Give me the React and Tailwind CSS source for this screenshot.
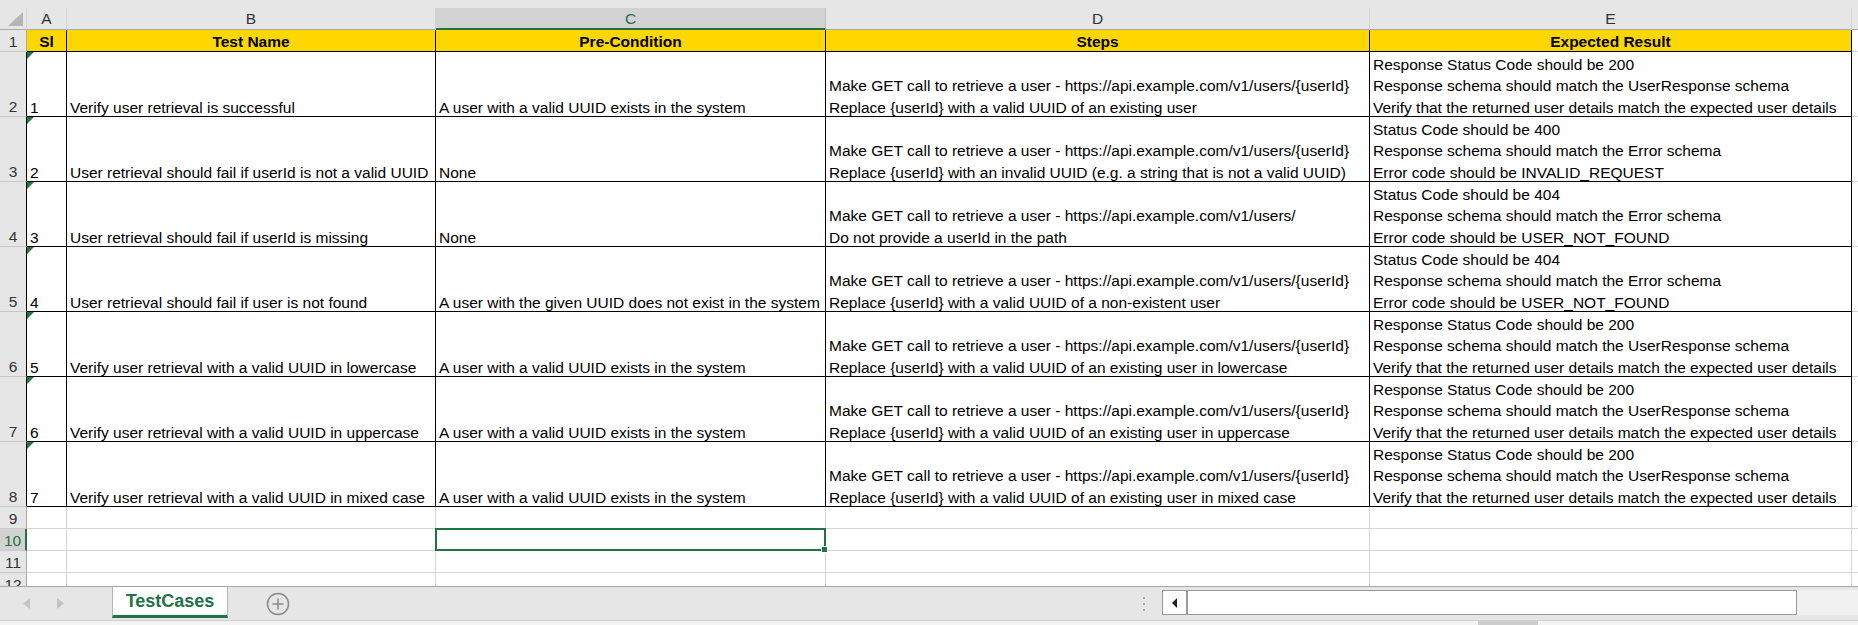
import { Fragment } from "react"

const GRID = "grid grid-cols-[27px_40px_369px_390px_544px_482px_1fr] grid-rows-[100%]"
const LETTERS = ["A", "B", "C", "D", "E"]
const HEADINGS = ["Sl", "Test Name", "Pre-Condition", "Steps", "Expected Result"]

const GET_CALL = "Make GET call to retrieve a user - https://api.example.com/v1/users/{userId}"
const EXISTS = "A user with a valid UUID exists in the system"
const OK_RESULT = [
  "Response Status Code should be 200",
  "Response schema should match the UserResponse schema",
  "Verify that the returned user details match the expected user details",
]
const NOT_FOUND = [
  "Status Code should be 404",
  "Response schema should match the Error schema",
  "Error code should be USER_NOT_FOUND",
]

const CASES = [
  {
    sl: "1",
    name: "Verify user retrieval is successful",
    pre: EXISTS,
    steps: [GET_CALL, "Replace {userId} with a valid UUID of an existing user"],
    expected: OK_RESULT,
  },
  {
    sl: "2",
    name: "User retrieval should fail if userId is not a valid UUID",
    pre: "None",
    steps: [GET_CALL, "Replace {userId} with an invalid UUID (e.g. a string that is not a valid UUID)"],
    expected: [
      "Status Code should be 400",
      "Response schema should match the Error schema",
      "Error code should be INVALID_REQUEST",
    ],
  },
  {
    sl: "3",
    name: "User retrieval should fail if userId is missing",
    pre: "None",
    steps: ["Make GET call to retrieve a user - https://api.example.com/v1/users/", "Do not provide a userId in the path"],
    expected: NOT_FOUND,
  },
  {
    sl: "4",
    name: "User retrieval should fail if user is not found",
    pre: "A user with the given UUID does not exist in the system",
    steps: [GET_CALL, "Replace {userId} with a valid UUID of a non-existent user"],
    expected: NOT_FOUND,
  },
  {
    sl: "5",
    name: "Verify user retrieval with a valid UUID in lowercase",
    pre: EXISTS,
    steps: [GET_CALL, "Replace {userId} with a valid UUID of an existing user in lowercase"],
    expected: OK_RESULT,
  },
  {
    sl: "6",
    name: "Verify user retrieval with a valid UUID in uppercase",
    pre: EXISTS,
    steps: [GET_CALL, "Replace {userId} with a valid UUID of an existing user in uppercase"],
    expected: OK_RESULT,
  },
  {
    sl: "7",
    name: "Verify user retrieval with a valid UUID in mixed case",
    pre: EXISTS,
    steps: [GET_CALL, "Replace {userId} with a valid UUID of an existing user in mixed case"],
    expected: OK_RESULT,
  },
]

function RowHeader({ n, framed, selected }) {
  return (
    <div
      className={
        "flex items-end justify-center overflow-hidden border-b leading-[20px] " +
        (selected
          ? "border-r-2 border-b-[#c6c6c6] border-r-[#217346] bg-[#d2d2d2] text-[#217346]"
          : framed
            ? "border-r border-b-[#c6c6c6] border-r-black bg-[#e6e6e6] text-[#333333]"
            : "border-r border-b-[#c6c6c6] border-r-[#ababab] bg-[#e6e6e6] text-[#333333]")
      }
    >
      <span className="translate-y-[1px]">{n}</span>
    </div>
  )
}

function Lines({ lines }) {
  return (
    <div className="flex flex-col justify-end">
      {lines.map((line) => (
        <div key={line}>{line}</div>
      ))}
    </div>
  )
}

function DataCell({ children, marker }) {
  return (
    <div className="relative flex items-end overflow-hidden whitespace-nowrap border-r border-b border-black bg-white px-[3px] leading-[21.3px]">
      {marker && (
        <span className="absolute top-0 left-0 h-0 w-0 border-t-[7px] border-r-[7px] border-t-[#1f7a3f] border-r-transparent" />
      )}
      <div className="translate-y-[2px]">{children}</div>
    </div>
  )
}

function EmptyRow({ n, selected }) {
  return (
    <div className={GRID + " h-[22px] shrink-0"}>
      <RowHeader n={n} selected={selected} />
      {LETTERS.map((letter) => (
        <div key={letter} className="relative border-r border-b border-[#d4d4d4] bg-white">
          {selected && letter === "C" && (
            <div className="absolute -top-[1px] -right-[1px] -bottom-[1px] -left-[1px] z-10 border-2 border-[#217346]">
              <span className="absolute -right-[4px] -bottom-[4px] h-[7px] w-[7px] border border-white bg-[#217346]" />
            </div>
          )}
        </div>
      ))}
      <div className="border-b border-[#d4d4d4] bg-white" />
    </div>
  )
}

function ColumnHeaders() {
  return (
    <div className={GRID + " h-[22px] shrink-0"}>
      <div className="flex items-end justify-end border-r border-b border-r-[#d4d4d4] border-b-[#ababab] bg-[#e6e6e6] pr-[3px] pb-[3px]">
        <svg width="15" height="14" viewBox="0 0 15 14">
          <path d="M15 0 L15 14 L0 14 Z" fill="#b5b5b5" />
        </svg>
      </div>
      {LETTERS.map((letter) =>
        letter === "C" ? (
          <div
            key={letter}
            className="flex items-center justify-center border-r border-b-2 border-r-[#bdbdbd] border-b-[#217346] bg-[#d2d2d2] pt-[1px] text-[#217346]"
          >
            {letter}
          </div>
        ) : (
          <div
            key={letter}
            className="flex items-center justify-center border-r border-b border-r-[#d4d4d4] border-b-[#ababab] bg-[#e6e6e6] pt-[1px] text-[#333333]"
          >
            {letter}
          </div>
        ),
      )}
      <div className="border-b border-[#ababab] bg-[#e6e6e6]" />
    </div>
  )
}

function SheetTabs() {
  return (
    <div className="flex h-[34px] shrink-0 border-t border-[#a6a6a6] bg-[#e6e6e6]">
      <div className="flex w-[112px] items-center pl-[23px]">
        <svg width="7" height="11" viewBox="0 0 7 11">
          <path d="M7 0 L0 5.5 L7 11 Z" fill="#c4c4c4" />
        </svg>
        <svg className="ml-[27px]" width="7" height="11" viewBox="0 0 7 11">
          <path d="M0 0 L7 5.5 L0 11 Z" fill="#c4c4c4" />
        </svg>
      </div>
      <div className="flex h-[31px] w-[116px] items-center justify-center border-x border-b-[3px] border-x-[#b4b4b4] border-b-[#217346] bg-white pt-[1px] text-[18px] font-bold text-[#217346]">
        TestCases
      </div>
      <div className="ml-[38px] flex items-center">
        <svg width="24" height="24" viewBox="0 0 24 24">
          <circle cx="12" cy="12" r="10.5" fill="none" stroke="#8a8a8a" strokeWidth="1.5" />
          <path d="M12 6.5 V17.5 M6.5 12 H17.5" stroke="#8a8a8a" strokeWidth="1.5" />
        </svg>
      </div>
      <div className="flex-1" />
      <div className="flex flex-col justify-center gap-[4px] pr-[17px]">
        <span className="h-[2px] w-[2px] bg-[#a8a8a8]" />
        <span className="h-[2px] w-[2px] bg-[#a8a8a8]" />
        <span className="h-[2px] w-[2px] bg-[#a8a8a8]" />
      </div>
      <div className="mt-[3px] flex h-[25px] w-[635px] border border-[#999999] bg-white">
        <div className="flex w-[25px] items-center justify-center border-r-2 border-[#9a9a9a]">
          <svg width="5" height="10" viewBox="0 0 5 10">
            <path d="M5 0 L0 5 L5 10 Z" fill="#222222" />
          </svg>
        </div>
      </div>
      <div className="mt-[3px] h-[25px] w-[61px] bg-[#f1f1f1]" />
    </div>
  )
}

export default function App() {
  return (
    <div className="flex h-[625px] w-[1858px] flex-col overflow-hidden bg-[#e6e6e6] font-['Liberation_Sans',Arial,sans-serif] text-[15.5px] text-black">
      <div className="h-[8px] shrink-0" />
      <div className="flex h-[578px] shrink-0 flex-col overflow-hidden">
        <ColumnHeaders />

        <div className={GRID + " h-[22px] shrink-0"}>
          <RowHeader n={1} />
          {HEADINGS.map((heading) => (
            <div
              key={heading}
              className="flex items-center justify-center border-r border-b border-black bg-[#ffd700] pt-[3px] font-bold leading-none"
            >
              {heading}
            </div>
          ))}
          <div className="border-b border-[#d4d4d4] bg-white" />
        </div>

        {CASES.map((row, index) => (
          <Fragment key={row.sl}>
            <div className={GRID + " h-[65px] shrink-0"}>
              <RowHeader n={index + 2} framed />
              <DataCell marker>{row.sl}</DataCell>
              <DataCell>{row.name}</DataCell>
              <DataCell>{row.pre}</DataCell>
              <DataCell>
                <Lines lines={row.steps} />
              </DataCell>
              <DataCell>
                <Lines lines={row.expected} />
              </DataCell>
              <div className="border-b border-[#d4d4d4] bg-white" />
            </div>
          </Fragment>
        ))}

        <EmptyRow n={9} />
        <EmptyRow n={10} selected />
        <EmptyRow n={11} />
        <EmptyRow n={12} />
      </div>
      <SheetTabs />
      <div className="flex h-[5px] shrink-0 border-t border-[#cfcfcf] bg-[#f3f3f3]">
        <div className="ml-[1478px] w-[60px] bg-[#cdcdcd]" />
      </div>
    </div>
  )
}
